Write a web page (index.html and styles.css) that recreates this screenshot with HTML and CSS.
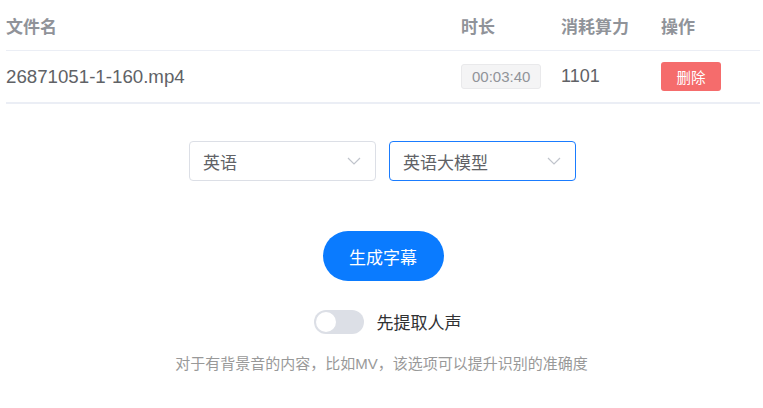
FILE: index.html
```html
<!DOCTYPE html>
<html lang="zh-CN">
<head>
    <meta charset="UTF-8">
    <meta name="viewport" content="width=device-width, initial-scale=1.0">
    <title>生成字幕</title>
    <link rel="stylesheet" href="styles.css">
</head>
<body>
    <div class="table">
        <div class="row head">
            <div class="cell">文件名</div>
            <div class="cell">时长</div>
            <div class="cell">消耗算力</div>
            <div class="cell">操作</div>
        </div>
        <div class="row body">
            <div class="cell name">26871051-1-160.mp4</div>
            <div class="cell"><span class="tag">00:03:40</span></div>
            <div class="cell">1101</div>
            <div class="cell"><button class="btn-danger">删除</button></div>
        </div>
    </div>

    <div class="selects">
        <div class="select">
            <span>英语</span>
            <svg class="arrow" width="14" height="8" viewBox="0 0 14 8"><path d="M1 1 L7 7 L13 1" fill="none" stroke="#c0c4cc" stroke-width="1.2"/></svg>
        </div>
        <div class="select active">
            <span>英语大模型</span>
            <svg class="arrow" width="14" height="8" viewBox="0 0 14 8"><path d="M1 1 L7 7 L13 1" fill="none" stroke="#c0c4cc" stroke-width="1.2"/></svg>
        </div>
    </div>

    <div class="actions">
        <button class="btn-primary">生成字幕</button>
    </div>

    <div class="switch-row">
        <span class="switch"><span class="knob"></span></span>
        <span class="switch-label">先提取人声</span>
    </div>

    <p class="note">对于有背景音的内容，比如MV，该选项可以提升识别的准确度</p>
</body>
</html>
```

FILE: styles.css
```css
body {
    margin: 0;
    background: #fff;
    font-family: "Liberation Sans", "Noto Sans CJK SC", sans-serif;
    color: #606266;
}

.table {
    margin-left: 6px;
    width: 754px;
}

.row {
    display: grid;
    grid-template-columns: 455px 100px 100px 1fr;
    align-items: center;
}

.row.head {
    height: 50px;
    border-bottom: 1px solid #ebeef5;
    font-size: 17px;
    font-weight: bold;
    color: #909399;
}

.row.body {
    height: 51px;
    border-bottom: 2px solid #ebeef5;
    font-size: 18px;
    color: #606266;
}

.name {
    font-size: 18.7px;
}

.tag {
    display: inline-flex;
    align-items: center;
    height: 23px;
    padding: 0 10px;
    background: #f4f4f5;
    border: 1px solid #e9e9eb;
    border-radius: 3px;
    color: #909399;
    font-size: 15px;
}

.btn-danger {
    width: 60px;
    height: 29px;
    border: none;
    border-radius: 3px;
    background: #f56c6c;
    color: #fff;
    font-family: inherit;
    font-size: 14.5px;
    padding: 0;
}

.selects {
    display: flex;
    justify-content: center;
    gap: 13px;
    margin-top: 37px;
    padding-left: 2px;
}

.select {
    box-sizing: border-box;
    width: 187px;
    height: 40px;
    border: 1px solid #dcdfe6;
    border-radius: 4px;
    display: flex;
    align-items: center;
    justify-content: space-between;
    padding: 0 14px 0 13px;
    font-size: 17px;
    color: #606266;
}

.select.active {
    border-color: #1a7cff;
}

.actions {
    display: flex;
    justify-content: center;
    margin-top: 50px;
    padding-left: 3px;
}

.btn-primary {
    width: 121px;
    height: 50px;
    border: none;
    border-radius: 25px;
    background: #0a7bff;
    color: #fff;
    font-family: inherit;
    font-size: 17px;
    padding: 0;
}

.switch-row {
    display: flex;
    justify-content: center;
    align-items: center;
    gap: 13px;
    margin-top: 28px;
    padding-left: 12px;
}

.switch {
    position: relative;
    width: 50px;
    height: 24px;
    border-radius: 12px;
    background: #dcdfe6;
}

.knob {
    position: absolute;
    left: 2px;
    top: 2px;
    width: 20px;
    height: 20px;
    border-radius: 50%;
    background: #fff;
}

.switch-label {
    font-size: 17px;
    color: #303133;
}

.note {
    margin: 18px 0 0;
    text-align: center;
    font-size: 15px;
    color: #999;
}
```
